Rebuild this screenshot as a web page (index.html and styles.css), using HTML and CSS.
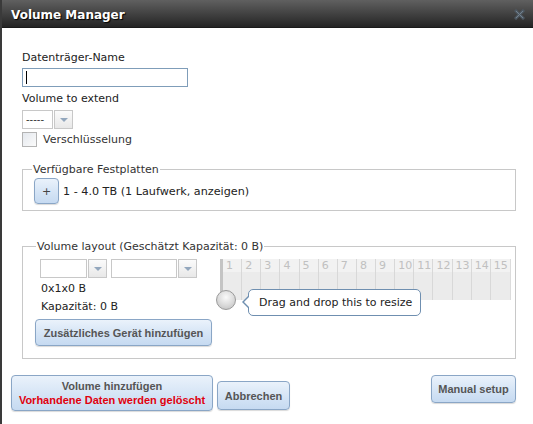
FILE: index.html
```html
<!DOCTYPE html>
<html lang="de">
<head>
  <meta charset="UTF-8">
  <title>Volume Manager</title>
  <link rel="stylesheet" href="styles.css">
</head>
<body>
  <div class="dialog">
    <div class="titlebar">
      <span class="title">Volume Manager</span>
      <svg class="close" width="11" height="11" viewBox="0 0 11 11">
        <path d="M2 2 L9 9 M9 2 L2 9" stroke="#4e5963" stroke-width="3" stroke-linecap="square"/>
        <path d="M2 2 L9 9 M9 2 L2 9" stroke="#74818d" stroke-width="1"/>
      </svg>
    </div>

    <div class="content">
      <label class="field-label">Datenträger-Name</label>
      <div class="text-input"><span class="caret"></span></div>

      <label class="field-label">Volume to extend</label>
      <div class="combo">
        <span class="combo-text">-----</span>
        <span class="combo-btn"><i class="arrow"></i></span>
      </div>

      <div class="check-row">
        <span class="checkbox"></span>
        <span>Verschlüsselung</span>
      </div>

      <fieldset class="disks">
        <legend>Verfügbare Festplatten</legend>
        <div class="disk-row">
          <button class="btn btn-plus">+</button>
          <span>1 - 4.0 TB (1 Laufwerk, anzeigen)</span>
        </div>
      </fieldset>

      <fieldset class="layout">
        <legend>Volume layout (Geschätzt Kapazität: 0 B)</legend>
        <div class="layout-row">
          <div class="layout-left">
            <div class="combo-pair">
              <div class="combo combo-wide">
                <span class="combo-text"></span>
                <span class="combo-btn"><i class="arrow"></i></span>
              </div>
              <div class="combo combo-wider">
                <span class="combo-text"></span>
                <span class="combo-btn"><i class="arrow"></i></span>
              </div>
            </div>
            <div class="info info-first">0x1x0 B</div>
            <div class="info">Kapazität: 0 B</div>
            <button class="btn btn-add">Zusätzliches Gerät hinzufügen</button>
          </div>

          <div class="disk-grid">
            <div class="cols" id="cols"></div>
            <span class="handle"></span>
            <div class="tip">Drag and drop this to resize</div>
          </div>
        </div>
      </fieldset>

      <div class="actions">
        <button class="btn btn-submit">Volume hinzufügen<br><span class="warn">Vorhandene Daten werden gelöscht</span></button>
        <button class="btn btn-cancel">Abbrechen</button>
        <button class="btn btn-manual">Manual setup</button>
      </div>
    </div>
  </div>

  <script>
    const cols = document.getElementById("cols");
    for (let i = 1; i <= 15; i++) {
      const col = document.createElement("div");
      col.className = "col";
      col.innerHTML = `<span class="num">${i}</span>`;
      cols.appendChild(col);
    }
  </script>
</body>
</html>
```

FILE: styles.css
```css
body {
  margin: 0;
  background: #fff;
  font-family: 'DejaVu Sans', Verdana, sans-serif;
  font-size: 11px;
  color: #222;
}
.dialog {
  width: 531px;
  height: 424px;
  border-left: 2px solid #3a3a3a;
  overflow: hidden;
}
.titlebar {
  height: 28px;
  background: linear-gradient(#606060, #3c3c3c 60%, #242424);
  display: flex;
  align-items: center;
  justify-content: space-between;
  padding: 0 8px 0 9px;
  border-bottom: 1px solid #1a1a1a;
  box-sizing: border-box;
}
.title {
  color: #fff;
  font-weight: bold;
  font-size: 12px;
  text-shadow: 1px 1px 1px #000;
  margin-top: 2px;
}
.close {
  margin-top: 2px;
}
.content {
  padding: 23px 17px 0 20px;
}
.field-label {
  display: block;
  line-height: 14px;
  color: #222;
}
.text-input {
  width: 164px;
  height: 17px;
  border: 1px solid #7f9db9;
  margin: 3px 0 5px;
  position: relative;
}
.caret {
  position: absolute;
  left: 3px;
  top: 2px;
  width: 1px;
  height: 13px;
  background: #000;
}
.combo {
  display: flex;
  height: 19px;
  margin-top: 4px;
}
.combo-text {
  width: 26px;
  border: 1px solid #c8c8c8;
  padding-left: 3px;
  line-height: 17px;
  color: #333;
  font-size: 10px;
}
.combo-btn {
  width: 17px;
  border: 1px solid #c8c8c8;
  margin-left: 1px;
  background: linear-gradient(#fbfbfb, #e8e8e8);
  display: flex;
  align-items: center;
  justify-content: center;
}
.arrow {
  width: 0;
  height: 0;
  border-left: 4px solid transparent;
  border-right: 4px solid transparent;
  border-top: 4px solid #93a7bd;
}
.check-row {
  display: flex;
  align-items: center;
  gap: 6px;
  margin-top: 3px;
  color: #333;
}
.checkbox {
  width: 13px;
  height: 13px;
  border: 1px solid #b4b4b4;
  background: linear-gradient(135deg, #e4e8ee, #fbfbfb);
}
fieldset {
  border: 1px solid #c8c8c8;
  margin: 0;
  min-width: 0;
}
legend {
  color: #333;
  padding: 0 1px;
}
.disks {
  margin-top: 16px;
  padding: 2px 8px 11px 11px;
  height: 48px;
  box-sizing: border-box;
}
.disks legend {
  margin-left: -2px;
}
.disk-row {
  display: flex;
  align-items: center;
  gap: 4px;
  color: #222;
  font-size: 11.2px;
}
.btn {
  font-family: 'Liberation Sans', Arial, sans-serif;
  font-size: 11px;
  font-weight: bold;
  color: #555;
  white-space: nowrap;
  border: 1px solid #8aa6c6;
  border-radius: 4px;
  background: linear-gradient(#eaf2fb, #d3e3f5 60%, #c6daf1);
  box-shadow: 0 1px 1px rgba(0, 0, 0, 0.15);
  cursor: pointer;
  padding: 0;
}
.btn-plus {
  width: 25px;
  height: 26px;
  font-family: 'DejaVu Sans', sans-serif;
  font-weight: normal;
  color: #444;
}
.layout {
  margin-top: 29px;
  padding: 6px 3px 12px 12px;
  height: 119px;
  box-sizing: border-box;
}
.layout legend {
  margin-left: 1px;
}
.layout-row {
  display: flex;
  gap: 8px;
}
.layout-left {
  width: 177px;
}
.combo-pair {
  display: flex;
  gap: 4px;
  margin-left: 5px;
}
.combo-pair .combo {
  margin-top: 0;
}
.combo-wide .combo-text {
  width: 42px;
}
.combo-wider .combo-text {
  width: 61px;
}
.info {
  margin-left: 6px;
  line-height: 18px;
}
.info-first {
  margin-top: 2px;
}
.btn-add {
  width: 177px;
  height: 27px;
  margin-top: 3px;
}
.disk-grid {
  position: relative;
  width: 291px;
  height: 41px;
  border-left: 3px solid #c4c4c4;
  box-sizing: border-box;
}
.cols {
  display: grid;
  grid-template-columns: repeat(15, 1fr);
  height: 100%;
  background: #ebebeb;
  border-right: 1px solid #dcdcdc;
  box-sizing: border-box;
}
.col {
  border-right: 1px solid #d8d8d8;
  background: linear-gradient(#f2f2f2 13px, #ebebeb 13px);
}
.col:last-child {
  border-right: none;
}
.num {
  display: block;
  color: #c0c0c0;
  font-size: 11px;
  line-height: 13px;
  padding-left: 3px;
}
.handle {
  position: absolute;
  left: -7px;
  top: 31px;
  width: 18px;
  height: 18px;
  border: 1px solid #9a9a9a;
  border-radius: 50%;
  background: radial-gradient(circle at 50% 35%, #fafafa, #dadada 55%, #bcbcbc);
}
.tip {
  position: absolute;
  left: 25px;
  top: 30px;
  width: 173px;
  height: 27px;
  border: 1px solid #6f8fb0;
  border-radius: 5px;
  background: #fff;
  color: #222;
  line-height: 25px;
  padding-left: 10px;
  box-sizing: border-box;
}
.tip::before {
  content: "";
  position: absolute;
  left: -7px;
  top: 5px;
  border-top: 7px solid transparent;
  border-bottom: 7px solid transparent;
  border-right: 7px solid #6f8fb0;
}
.tip::after {
  content: "";
  position: absolute;
  left: -5px;
  top: 6px;
  border-top: 6px solid transparent;
  border-bottom: 6px solid transparent;
  border-right: 6px solid #fff;
}
.actions {
  display: flex;
  align-items: flex-start;
  margin: 16px 0 0 -11px;
}
.btn-submit {
  width: 202px;
  height: 36px;
  line-height: 14px;
}
.warn {
  color: #e0000e;
}
.btn-cancel {
  width: 73px;
  height: 29px;
  margin: 6px 0 0 4px;
}
.btn-manual {
  width: 85px;
  height: 28px;
  margin-left: auto;
}
```
